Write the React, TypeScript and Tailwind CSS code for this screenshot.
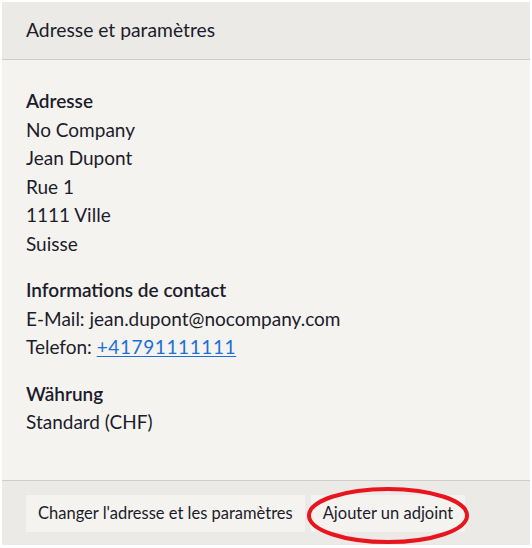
import React from "react";

export default function App() {
  const font = { fontFamily: "Lato, 'Noto Sans', sans-serif" };
  return (
    <div className="w-[532px] h-[548px] bg-white p-[2px] pb-[3px]" style={font}>
      <div className="relative flex h-full flex-col bg-[#f4f3f0] text-[#1c1c2b]">
        <div className="flex h-[58px] items-center border-b border-[#cfcdc9] bg-[#ebeae6] px-6 text-[19.3px]">
          Adresse et paramètres
        </div>
        <div className="flex flex-1 flex-col gap-[18px] px-6 pt-[27px] text-[19px] leading-[28.5px]">
          <div>
            <div className="font-semibold">Adresse</div>
            <div>No Company</div>
            <div>Jean Dupont</div>
            <div>Rue 1</div>
            <div>1111 Ville</div>
            <div>Suisse</div>
          </div>
          <div>
            <div className="font-semibold">Informations de contact</div>
            <div>E-Mail: jean.dupont@nocompany.com</div>
            <div>
              Telefon:{" "}
              <a href="#" className="tracking-[0.6px] text-[#1a6fd8] underline underline-offset-2">
                +41791111111
              </a>
            </div>
          </div>
          <div>
            <div className="font-semibold">Währung</div>
            <div>Standard (CHF)</div>
          </div>
        </div>
        <div className="flex h-[65px] items-center gap-[6px] border-t border-[#cfcdc9] bg-[#ebeae6] px-6 text-[16.5px]">
          <button className="h-[37px] bg-[#f4f3f0] px-[12px]">Changer l'adresse et les paramètres</button>
          <button className="h-[37px] bg-[#f4f3f0] px-[12px]">Ajouter un adjoint</button>
        </div>
        <svg className="absolute left-[304px] top-[484px] pointer-events-none" width="164" height="59" viewBox="0 0 164 59">
          <ellipse cx="82" cy="29.5" rx="79" ry="26.5" fill="none" stroke="#e8141e" strokeWidth="4" />
        </svg>
      </div>
    </div>
  );
}
